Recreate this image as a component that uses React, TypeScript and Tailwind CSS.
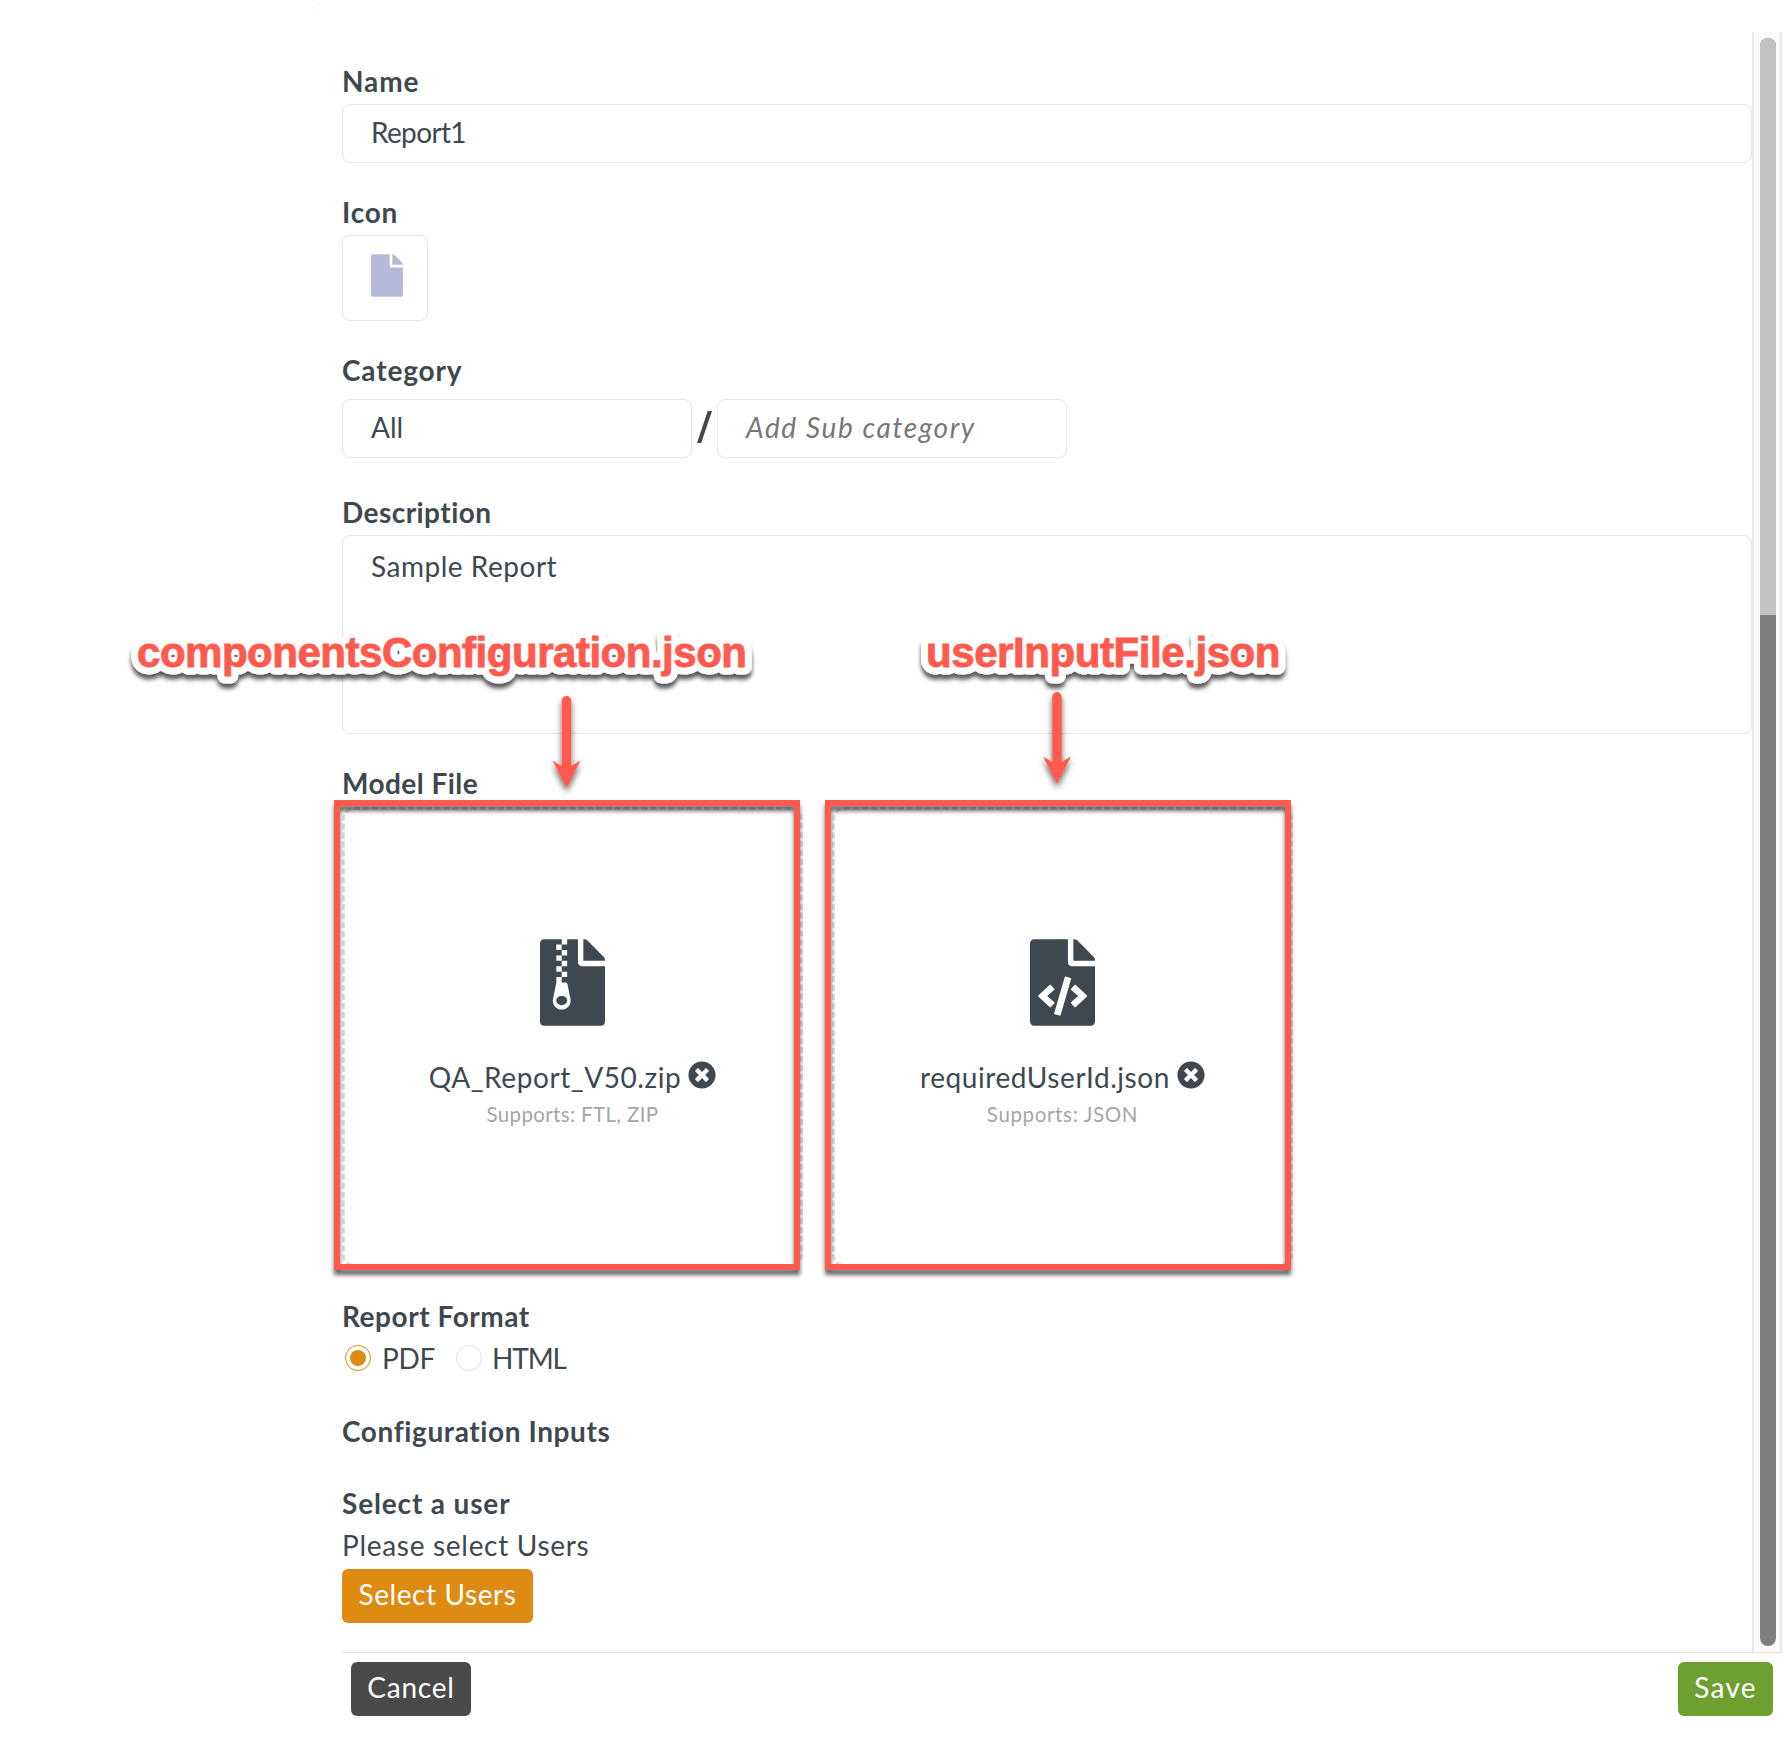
import { useState } from 'react';
import type { ReactNode } from 'react';
import { FaFile, FaFileArchive, FaFileCode, FaTimesCircle } from 'react-icons/fa';

const ACCENT = '#ff5a4d';

function Label({ children, className = '' }: { children: ReactNode; className?: string }) {
    return <div className={`h-9 leading-[38px] font-bold whitespace-nowrap ${className}`}>{children}</div>;
}

function DropZone({ icon, name, supports }: { icon: ReactNode; name: ReactNode; supports: ReactNode }) {
    return (
        <div className="flex h-[460px] w-[461px] flex-col items-center rounded-xl border-3 border-dashed border-[#dedede] pt-[129px]">
            {icon}
            <div className="mt-[33px] flex h-9 items-center gap-[7px] leading-9 whitespace-nowrap">
                {name}
                <FaTimesCircle className="-mt-1 size-7" />
            </div>
            <div className="mt-[7px] h-6 text-[20.5px] leading-6 whitespace-nowrap text-[#a3a6a9]">{supports}</div>
        </div>
    );
}

function Radio({ checked, onSelect }: { checked: boolean; onSelect: () => void }) {
    return (
        <button
            type="button"
            role="radio"
            aria-checked={checked}
            onClick={onSelect}
            className={`flex size-[26px] items-center justify-center rounded-full border bg-white ${
                checked ? 'border-[#dd8b13]' : 'border-[#e2e2e2]'
            }`}
        >
            {checked && <span className="size-4 rounded-full bg-[#dd8b13]" />}
        </button>
    );
}

function Arrow({ x, y }: { x: number; y: number }) {
    return (
        <g transform={`translate(${x} ${y})`} fill={ACCENT} filter="url(#arrow-shadow)">
            <path d="M-4.7 4.7a4.7 4.7 0 0 1 9.4 0V70L14 64.5 0 92-14 64.5-4.7 70Z" />
        </g>
    );
}

function Callout({ x, width, dots, children }: { x: number; width: number; dots: number[]; children: string }) {
    return (
        <g>
            <text
                x={x}
                y={667}
                textLength={width}
                fill="#fff"
                stroke="#fff"
                strokeWidth={15}
                strokeLinejoin="round"
                filter="url(#text-shadow)"
            >
                {children}
            </text>
            {dots.map((cx) => (
                <ellipse key={cx} cx={cx} cy={656} rx={2} ry={1.2} fill="#777" />
            ))}
            <text x={x} y={667} textLength={width} fill={ACCENT} stroke={ACCENT} strokeWidth={0.9} aria-hidden="true">
                {children}
            </text>
        </g>
    );
}

// Callouts, arrows and frames drawn on top of the form
function Annotations() {
    return (
        <svg
            className="pointer-events-none absolute inset-0 font-['Liberation_Sans',Arial,sans-serif] text-[42px] font-bold"
            width="1786"
            height="1750"
            viewBox="0 0 1786 1750"
        >
            <defs>
                <filter id="text-shadow" filterUnits="userSpaceOnUse" x="100" y="600" width="1250" height="120">
                    <feDropShadow dx="0" dy="5" stdDeviation="2" floodColor="#000" floodOpacity="0.65" />
                </filter>
                <filter id="arrow-shadow" filterUnits="userSpaceOnUse" x="-40" y="-20" width="80" height="140">
                    <feDropShadow dx="0" dy="4" stdDeviation="3" floodColor="#000" floodOpacity="0.6" />
                </filter>
                <filter id="frame-shadow" filterUnits="userSpaceOnUse" x="300" y="780" width="1020" height="520">
                    <feDropShadow dx="0" dy="5" stdDeviation="2" floodColor="#000" floodOpacity="0.6" />
                </filter>
            </defs>
            {/* Panel corner */}
            <path d="M313.5 8.5Q314.5 4.5 318.5 3.5" fill="none" stroke="#ccc" strokeWidth="0.8" strokeDasharray="1.2 4.8" />
            <Callout x={137} width={610} dots={[173, 236, 259.6, 424, 498.6, 614, 710]}>
                componentsConfiguration.json
            </Callout>
            <Callout x={926} width={354.5} dots={[1063, 1243]}>
                userInputFile.json
            </Callout>
            <Arrow x={566.5} y={696} />
            <Arrow x={1057} y={692} />
            <g fill="none" stroke={ACCENT} strokeWidth={6} filter="url(#frame-shadow)">
                <rect x="337" y="803" width="460" height="464" />
                <rect x="828" y="803" width="460" height="464" />
            </g>
        </svg>
    );
}

export default function App() {
    const [format, setFormat] = useState('PDF');

    return (
        <div className="relative flex h-[1750px] w-[1786px] flex-col overflow-hidden bg-white pl-[342px] font-[Lato,'Open_Sans',sans-serif] text-[28px] text-[#40484f]">
            <div className="mt-8 flex h-[1620px]">
                <form className="w-[1410px] pt-[30px]" onSubmit={(e) => e.preventDefault()}>
                    <Label className="tracking-[0.9px]">Name</Label>
                    <div className="mt-1.5 h-[59px] rounded-lg border border-[#e6e6e6] pl-7 leading-[55px] tracking-[-0.65px]">
                        Report1
                    </div>

                    <Label className="mt-[30px] tracking-[0.8px]">Icon</Label>
                    <div className="mt-1.5 h-[86px] w-[86px] rounded-lg border border-[#e6e6e6] pt-[18px] pl-7">
                        <FaFile className="h-[43px] w-8 text-[#b6bad8]" />
                    </div>

                    <Label className="mt-[30px] tracking-[0.85px]">Category</Label>
                    <div className="mt-3 flex h-[59px]">
                        <div className="w-[350px] rounded-lg border border-[#e6e6e6] pl-7 leading-[54px]">All</div>
                        <div className="flex w-[25px] items-center justify-center pb-1">
                            <svg width="15" height="32" viewBox="0 0 15 32" fill="currentColor">
                                <path d="M10.7 0H15L4.2 32H0Z" />
                            </svg>
                        </div>
                        <div className="w-[350px] rounded-lg border border-[#e6e6e6] pl-7 leading-[54px] tracking-[1.6px] text-[#777] italic">
                            Add Sub category
                        </div>
                    </div>

                    <Label className="mt-[35px] tracking-[0.45px]">Description</Label>
                    <div className="mt-1.5 h-[199px] rounded-lg border border-[#e6e6e6] pt-3 pl-7 leading-9 tracking-[0.52px]">
                        Sample Report
                    </div>

                    <Label className="mt-[30px] tracking-[0.45px]">Model File</Label>
                    <div className="mt-[7px] flex gap-[29px]">
                        <DropZone
                            icon={<FaFileArchive className="h-[87px] w-[65px]" />}
                            name={<span className="tracking-[0.57px]">QA_Report_V50.zip</span>}
                            supports={<span className="tracking-[0.35px]">Supports: FTL, ZIP</span>}
                        />
                        <DropZone
                            icon={<FaFileCode className="h-[87px] w-[65px]" />}
                            name={<span className="tracking-[0.57px]">requiredUserId.json</span>}
                            supports={<span className="tracking-[0.65px]">Supports: JSON</span>}
                        />
                    </div>

                    <Label className="mt-[30px] tracking-[0.55px]">Report Format</Label>
                    <div className="mt-[7px] flex h-9 items-center pl-[3px] leading-9">
                        <Radio checked={format === 'PDF'} onSelect={() => setFormat('PDF')} />
                        <span className="ml-[11px] w-[74px] tracking-[-0.3px]">PDF</span>
                        <Radio checked={format === 'HTML'} onSelect={() => setFormat('HTML')} />
                        <span className="ml-2.5 tracking-[-1.1px]">HTML</span>
                    </div>

                    <Label className="mt-9 tracking-[0.6px]">Configuration Inputs</Label>

                    <Label className="mt-9 tracking-[0.85px]">Select a user</Label>
                    <div className="mt-[7px] h-9 leading-9 tracking-[0.7px]">Please select Users</div>
                    <button className="mt-1.5 flex h-[54px] w-[191px] justify-center rounded-md bg-[#dd8b13] leading-[51px] tracking-[0.6px] text-white">
                        Select Users
                    </button>
                </form>

                {/* Scrollbar */}
                <div className="h-full w-[30px] border-x-2 border-[#e8e8e8] bg-[#fafafa] pt-1.5 pl-1.5">
                    <div className="flex h-[1608px] w-4 flex-col overflow-hidden rounded-full bg-[#7f7f7f]">
                        <div className="h-[577px] bg-[#c1c1c1]" />
                    </div>
                </div>
            </div>

            <footer className="flex w-[1440px] justify-between border-t border-[#e2e2e2] pt-[9px] pr-[9px] pl-[9px] text-white">
                <button className="flex h-[54px] w-[120px] justify-center rounded-md bg-[#4a4a4a] leading-[51px] tracking-[0.8px]">
                    Cancel
                </button>
                <button className="flex h-[54px] w-[95px] justify-center rounded-md bg-[#6da031] leading-[51px] tracking-[1.3px]">
                    Save
                </button>
            </footer>

            <Annotations />
        </div>
    );
}
